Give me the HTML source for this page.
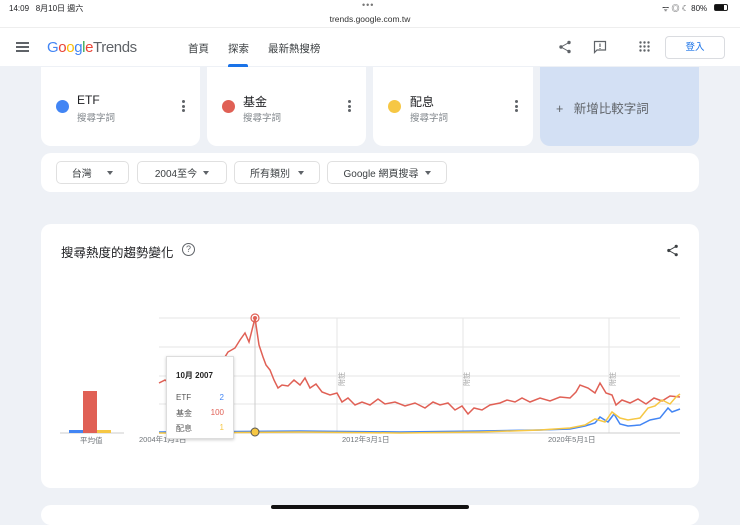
<!DOCTYPE html>
<html><head><meta charset="utf-8">
<style>
*{box-sizing:border-box;margin:0;padding:0}
body{width:740px;height:514px;overflow:hidden;background:#eef1f6;font-family:"Liberation Sans","Noto Sans CJK TC",sans-serif;position:relative;color:#202124}
.abs{position:absolute}
.card{position:absolute;background:#fff;border-radius:10px}
.dd{position:absolute;top:161px;height:23px;border:1px solid #e0e0e0;border-radius:5px;font-size:10px;color:#3c4043;display:flex;align-items:center;justify-content:center;gap:10px;background:#fff}
.tri{width:0;height:0;border-left:3.5px solid transparent;border-right:3.5px solid transparent;border-top:4px solid #5f6368}
.dot{position:absolute;width:13px;height:13px;border-radius:50%;top:100px}
.term{position:absolute;top:93px;font-size:12px}
.sub{position:absolute;top:110px;font-size:9.5px;color:#80868b}
.kebab{position:absolute;top:100px;width:3px}
.kebab i{display:block;width:3px;height:3px;border-radius:50%;background:#5f6368;margin-bottom:1.5px}
</style></head><body>
<div class="abs" style="left:0;top:0;width:740px;height:66px;background:#fff"></div>
<div class="abs" style="left:9px;top:3px;font-size:8px">14:09&nbsp;&nbsp; 8月10日 週六</div>
<div class="abs" style="left:362px;top:0px;font-size:9px;color:#777;letter-spacing:1px">•••</div>
<div class="abs" style="left:0;width:740px;text-align:center;top:14px;font-size:8.5px;color:#333">trends.google.com.tw</div>
<div class="abs" style="left:662px;top:3px;font-size:8px">ᯤ ◎ ☾ 80%</div>
<div class="abs" style="left:714px;top:4px;width:14px;height:7px;border:1px solid #222;border-radius:2px"><div style="width:9px;height:5px;background:#111"></div></div>
<div class="abs" style="left:0;top:27px;width:740px;height:1px;background:#eee"></div>
<div class="abs" style="left:16px;top:42px;width:13px"><div style="height:1.5px;background:#5f6368;margin-bottom:2.5px"></div><div style="height:1.5px;background:#5f6368;margin-bottom:2.5px"></div><div style="height:1.5px;background:#5f6368"></div></div>
<div class="abs" style="left:47px;top:39px;font-size:15px;letter-spacing:-0.4px"><span style="color:#4285f4">G</span><span style="color:#ea4335">o</span><span style="color:#fbbc05">o</span><span style="color:#4285f4">g</span><span style="color:#34a853">l</span><span style="color:#ea4335">e</span><span style="color:#5f6368">Trends</span></div>
<div class="abs" style="left:188px;top:41px;font-size:10.5px;color:#3c4043">首頁</div>
<div class="abs" style="left:228px;top:41px;font-size:10.5px;color:#3c4043">探索</div>
<div class="abs" style="left:228px;top:64px;width:20px;height:3px;background:#1a73e8;border-radius:2px 2px 0 0"></div>
<div class="abs" style="left:268px;top:41px;font-size:10.5px;color:#3c4043">最新熱搜榜</div>
<svg class="abs" style="left:558px;top:40px" width="14" height="14" viewBox="0 0 14 14"><circle cx="11" cy="2.5" r="1.7" fill="#5f6368"/><circle cx="3" cy="7" r="1.7" fill="#5f6368"/><circle cx="11" cy="11.5" r="1.7" fill="#5f6368"/><path d="M11 2.5L3 7L11 11.5" stroke="#5f6368" fill="none"/></svg>
<svg class="abs" style="left:593px;top:40px" width="14" height="14" viewBox="0 0 14 14"><path d="M1.5 1.5H12.5V10H4L1.5 12.5Z" stroke="#5f6368" fill="none" stroke-width="1.2"/><path d="M7 3.5V7M7 8V9" stroke="#5f6368" stroke-width="1.2"/></svg>
<svg class="abs" style="left:639px;top:41px" width="11" height="11" viewBox="0 0 11 11" fill="#5f6368"><circle cx="1.5" cy="1.5" r="1.2"/><circle cx="5.5" cy="1.5" r="1.2"/><circle cx="9.5" cy="1.5" r="1.2"/><circle cx="1.5" cy="5.5" r="1.2"/><circle cx="5.5" cy="5.5" r="1.2"/><circle cx="9.5" cy="5.5" r="1.2"/><circle cx="1.5" cy="9.5" r="1.2"/><circle cx="5.5" cy="9.5" r="1.2"/><circle cx="9.5" cy="9.5" r="1.2"/></svg>
<div class="abs" style="left:665px;top:36px;width:60px;height:23px;border:1px solid #dadce0;border-radius:4px;font-size:9.5px;color:#1a73e8;text-align:center;line-height:21px">登入</div>

<div class="card" style="left:41px;top:67px;width:159px;height:79px;border-radius:0 0 10px 10px"></div>
<div class="card" style="left:207px;top:67px;width:159px;height:79px;border-radius:0 0 10px 10px"></div>
<div class="card" style="left:373px;top:67px;width:160px;height:79px;border-radius:0 0 10px 10px"></div>
<div class="card" style="left:540px;top:67px;width:159px;height:79px;background:#d3e0f4;border-radius:0 0 10px 10px"></div>
<div class="dot" style="left:56px;background:#4285f4"></div>
<div class="term" style="left:77px">ETF</div><div class="sub" style="left:77px">搜尋字詞</div>
<div class="kebab" style="left:182px"><i></i><i></i><i></i></div>
<div class="dot" style="left:222px;background:#e06055"></div>
<div class="term" style="left:243px">基金</div><div class="sub" style="left:243px">搜尋字詞</div>
<div class="kebab" style="left:348px"><i></i><i></i><i></i></div>
<div class="dot" style="left:388px;background:#f6c744"></div>
<div class="term" style="left:410px">配息</div><div class="sub" style="left:410px">搜尋字詞</div>
<div class="kebab" style="left:515px"><i></i><i></i><i></i></div>
<div class="abs" style="left:556px;top:98px;font-size:12.5px;color:#5f6368">+&nbsp;&nbsp; 新增比較字詞</div>

<div class="card" style="left:41px;top:153px;width:658px;height:39px"></div>
<div class="dd" style="left:56px;width:73px">台灣 &nbsp;<span class="tri"></span></div>
<div class="dd" style="left:137px;width:90px;gap:6px">2004至今 <span class="tri"></span></div>
<div class="dd" style="left:234px;width:86px;gap:8px">所有類別 <span class="tri"></span></div>
<div class="dd" style="left:327px;width:120px;gap:6px">Google 網頁搜尋 <span class="tri"></span></div>

<div class="card" style="left:41px;top:224px;width:658px;height:264px"></div>
<div class="abs" style="left:61px;top:242px;font-size:12.5px;color:#202124">搜尋熱度的趨勢變化</div>
<div class="abs" style="left:182px;top:243px;width:13px;height:13px;border:1.2px solid #5f6368;border-radius:50%;font-size:9px;color:#5f6368;text-align:center;line-height:11px">?</div>
<svg class="abs" style="left:666px;top:244px" width="13" height="13" viewBox="0 0 14 14"><circle cx="11" cy="2.5" r="1.7" fill="#3c4043"/><circle cx="3" cy="7" r="1.7" fill="#3c4043"/><circle cx="11" cy="11.5" r="1.7" fill="#3c4043"/><path d="M11 2.5L3 7L11 11.5" stroke="#3c4043" fill="none"/></svg>

<svg class="abs" style="left:0;top:0" width="740" height="514">
<g stroke="#e6e6e6" stroke-width="1">
<line x1="159" y1="318" x2="680" y2="318"/><line x1="159" y1="347" x2="680" y2="347"/><line x1="159" y1="376" x2="680" y2="376"/><line x1="159" y1="404" x2="680" y2="404"/>
<line x1="337" y1="318" x2="337" y2="433"/><line x1="463" y1="318" x2="463" y2="433"/><line x1="609" y1="318" x2="609" y2="433"/>
<line x1="255" y1="318" x2="255" y2="433" stroke="#ccc"/>
</g>
<line x1="159" y1="433" x2="680" y2="433" stroke="#ccc"/>
<line x1="60" y1="433" x2="124" y2="433" stroke="#ccc"/>
<rect x="69" y="430" width="14" height="3" fill="#4285f4"/><rect x="83" y="391" width="14" height="42" fill="#e06055"/><rect x="97" y="430" width="14" height="3" fill="#f6c744"/>
<polyline fill="none" stroke="#e06055" stroke-width="1.5" points="159,383 165,380 172,385 180,378 190,380 200,372 210,368 220,365 228,352 235,348 240,340 245,333 249,342 255,318 259,345 263,357 266,365 270,370 274,380 278,388 282,385 288,386 294,380 300,385 305,378 310,388 316,384 322,392 330,395 337,393 342,402 348,398 355,405 362,402 370,405 378,399 385,404 395,402 405,406 415,403 425,408 433,402 440,405 448,403 455,410 462,406 468,414 474,408 482,410 490,405 500,403 507,400 515,402 522,398 530,402 540,398 550,401 560,397 570,398 576,392 580,385 588,388 595,393 600,383 606,393 612,395 616,405 622,400 630,403 638,399 646,404 654,398 662,401 670,396 680,397"/>
<polyline fill="none" stroke="#4285f4" stroke-width="1.5" points="159,432 300,431 400,432 480,431 540,430 570,429 585,426 595,423 600,417 608,422 614,414 620,424 628,426 640,425 650,420 660,418 668,408 672,412 680,409"/>
<polyline fill="none" stroke="#f6c744" stroke-width="1.5" points="159,433 300,432 400,433 480,432 540,430 570,428 585,425 595,419 605,422 612,412 620,418 628,420 640,418 648,408 655,406 662,400 670,404 676,397 680,394"/>
<circle cx="255" cy="318" r="4" fill="none" stroke="#e06055" stroke-width="1.2"/><circle cx="255" cy="318" r="2" fill="#e06055"/>
<circle cx="255" cy="432" r="4" fill="#f6c744" stroke="#555"/>
<text x="344" y="386" font-size="7" fill="#999" transform="rotate(-90 344 386)">附註</text>
<text x="469" y="386" font-size="7" fill="#999" transform="rotate(-90 469 386)">附註</text>
<text x="615" y="386" font-size="7" fill="#999" transform="rotate(-90 615 386)">附註</text>
<text x="139" y="442" font-size="7.5" fill="#70757a">2004年1月1日</text>
<text x="342" y="442" font-size="7.5" fill="#70757a">2012年3月1日</text>
<text x="548" y="442" font-size="7.5" fill="#70757a">2020年5月1日</text>
<text x="80" y="443" font-size="7.5" fill="#70757a">平均值</text>
</svg>
<div class="abs" style="left:166px;top:356px;width:68px;height:83px;background:#fff;border:1px solid #ddd;box-shadow:0 1px 3px rgba(0,0,0,.2);font-size:8px;color:#555">
<div style="position:absolute;left:9px;top:13px;font-weight:bold;color:#222">10月 2007</div>
<div style="position:absolute;left:9px;top:36px">ETF</div><div style="position:absolute;right:9px;top:36px;color:#4285f4">2</div>
<div style="position:absolute;left:9px;top:51px">基金</div><div style="position:absolute;right:9px;top:51px;color:#e06055">100</div>
<div style="position:absolute;left:9px;top:66px">配息</div><div style="position:absolute;right:9px;top:66px;color:#f6c744">1</div>
</div>
<div class="card" style="left:41px;top:505px;width:658px;height:20px"></div>
<div class="abs" style="left:271px;top:505px;width:198px;height:4px;border-radius:2px;background:#111"></div>
</body></html>
